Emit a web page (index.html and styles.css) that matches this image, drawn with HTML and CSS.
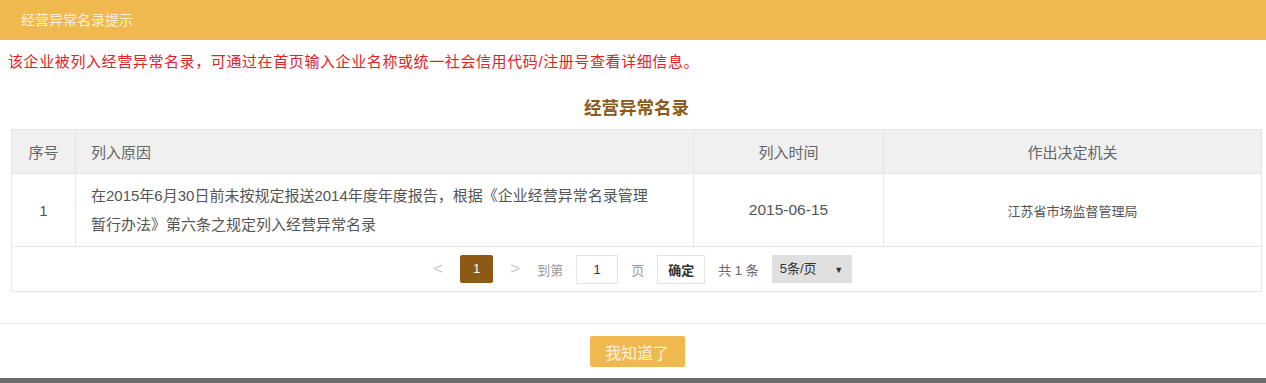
FILE: index.html
```html
<!DOCTYPE html>
<html lang="zh-CN">
  <head>
    <meta charset="UTF-8" />
    <title>经营异常名录提示</title>
    <link rel="stylesheet" href="styles.css">
  </head>
  <body>
    <div class="dialog">
      <div class="dialog-header">经营异常名录提示</div>
      <div class="dialog-body">
        <p class="notice">该企业被列入经营异常名录，可通过在首页输入企业名称或统一社会信用代码/注册号查看详细信息。</p>
        <h2 class="table-title">经营异常名录</h2>
        <table class="list">
          <thead>
            <tr>
              <th class="col-no">序号</th>
              <th class="col-reason">列入原因</th>
              <th class="col-date">列入时间</th>
              <th class="col-org">作出决定机关</th>
            </tr>
          </thead>
          <tbody>
            <tr>
              <td class="col-no">1</td>
              <td class="col-reason">在2015年6月30日前未按规定报送2014年度年度报告，根据《企业经营异常名录管理暂行办法》第六条之规定列入经营异常名录</td>
              <td class="col-date">2015-06-15</td>
              <td class="col-org">江苏省市场监督管理局</td>
            </tr>
            <tr>
              <td colspan="4" class="pager-cell">
                <div class="pager">
                  <span class="arrow">&lt;</span>
                  <span class="page current">1</span>
                  <span class="arrow">&gt;</span>
                  <span class="label">到第</span>
                  <input class="goto" type="text" value="1" />
                  <span class="label">页</span>
                  <button class="confirm">确定</button>
                  <span class="total">共 1 条</span>
                  <span class="size">5条/页 <i class="caret">▼</i></span>
                </div>
              </td>
            </tr>
          </tbody>
        </table>
      </div>
      <div class="dialog-footer">
        <button class="ok">我知道了</button>
      </div>
    </div>
  </body>
</html>
```

FILE: styles.css
```css
body {
  margin: 0;
  font-family: "Liberation Sans", Arial, "Noto Sans CJK SC", sans-serif;
  background-color: #fff;
}

.dialog {
  width: 1266px;
  height: 383px;
  display: flex;
  flex-direction: column;
  border-bottom: 5px solid #6b6b6b;
  box-sizing: border-box;
}

.dialog-header {
  height: 40px;
  line-height: 40px;
  padding-left: 21px;
  background-color: #f0b94f;
  color: #fdf1da;
  font-size: 14px;
}

.dialog-body {
  padding: 0 4px 0 11px;
  height: 284px;
  box-sizing: border-box;
  border-bottom: 1px solid #e8e8e8;
}

.notice {
  margin: 12px 0 0 -3px;
  font-size: 15px;
  letter-spacing: 0.6px;
  line-height: 20px;
  color: #dd2428;
}

.table-title {
  margin: 26px 0 0;
  height: 31px;
  line-height: 20px;
  text-align: center;
  font-size: 17.5px;
  font-weight: bold;
  color: #8a5b1c;
}

.list {
  width: 100%;
  border-collapse: collapse;
  font-size: 15px;
  color: #555;
}

.list th,
.list td {
  border: 1px solid #e6e6e6;
  font-weight: normal;
}

.list th {
  height: 41px;
  background-color: #f0f0f0;
  color: #666;
}

.col-no {
  width: 61px;
  text-align: center;
}

.list .col-reason {
  text-align: left;
  padding: 0 38px 0 15px;
}

.list td.col-reason {
  line-height: 29px;
  padding-top: 7px;
  padding-bottom: 7px;
}

.col-date {
  width: 187px;
  text-align: center;
}

.col-org {
  width: 375px;
  text-align: center;
}

.list td.col-date {
  font-size: 15.5px;
}

.list td.col-org {
  font-size: 13px;
}

.pager-cell {
  height: 42px;
}

.pager {
  display: flex;
  justify-content: center;
  align-items: center;
  gap: 13px;
  font-size: 13px;
  color: #999;
  padding-left: 8px;
}

.arrow {
  font-size: 17px;
  color: #c8c8c8;
  margin: 0 4px;
}

.page {
  width: 33px;
  height: 28px;
  line-height: 28px;
  text-align: center;
  color: #fff;
}

.page.current {
  background-color: #8c5a14;
  border-radius: 2px;
}

.goto {
  width: 42px;
  height: 29px;
  box-sizing: border-box;
  border: 1px solid #e4e4e4;
  text-align: center;
  font-size: 13px;
  color: #333;
  font-family: inherit;
}

.confirm {
  height: 29px;
  padding: 0 10px;
  border: 1px solid #e4e4e4;
  background-color: #fff;
  font-size: 13px;
  font-weight: bold;
  color: #333;
  font-family: inherit;
}

.total {
  color: #666;
}

.size {
  width: 80px;
  height: 28px;
  line-height: 28px;
  padding-left: 8px;
  box-sizing: border-box;
  background-color: #e0e0e0;
  color: #333;
}

.caret {
  font-style: normal;
  font-size: 9px;
  margin-left: 14px;
}

.dialog-footer {
  flex: 1;
  display: flex;
  justify-content: center;
  padding: 12px 0 0 8px;
}

.ok {
  width: 95px;
  height: 31px;
  border: none;
  border-radius: 2px;
  background-color: #f0b94f;
  color: #fff2dc;
  font-size: 16px;
  font-family: inherit;
}
```
